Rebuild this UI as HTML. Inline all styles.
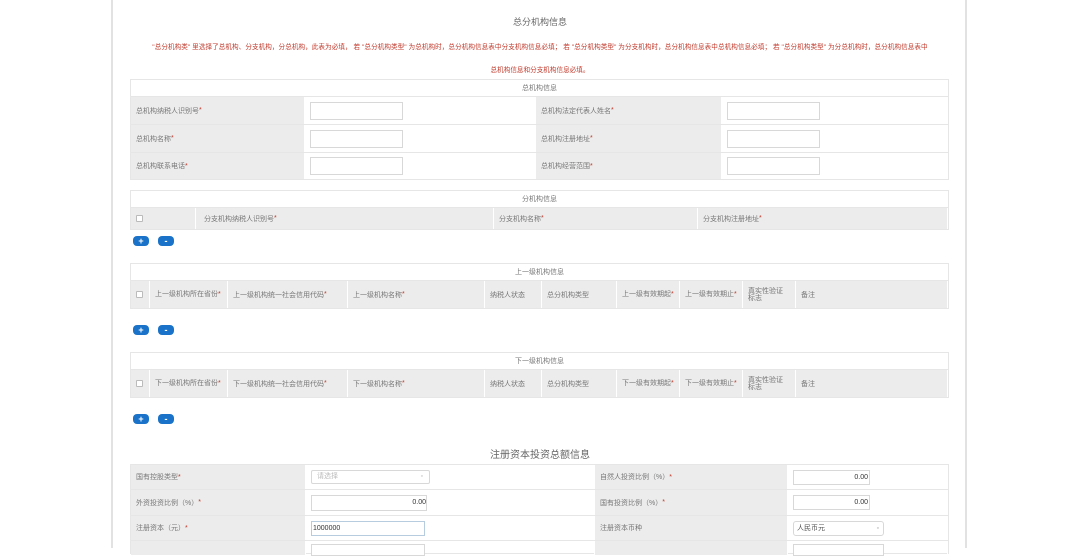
<!DOCTYPE html>
<html><head><meta charset="utf-8"><style>
*{margin:0;padding:0;box-sizing:border-box}
body{width:1080px;height:548px;overflow:hidden;background:#fff;font-family:"Liberation Sans","Noto Sans CJK SC",sans-serif;font-size:7px;color:#777;position:relative}
.pg{position:absolute;left:111px;top:0;width:856px;height:548px;border-left:2px solid #e2e2e2;border-right:2px solid #e2e2e2}
.a{position:absolute}
.t{position:absolute;left:130px;width:819px;border:1px solid #e6e6e6;background:#fff}
.hd{height:17px;line-height:17px;text-align:center;border-bottom:1px solid #e6e6e6}
.row{display:flex;border-top:1px solid #e6e6e6}
.row>div{border-right:1px solid #fff;display:flex;align-items:center;padding-left:5px}
.g{background:#ececec}
.inp{border:1px solid #d8d8d8;background:#fff;height:18px}
.r{color:#c0392b}
.btn{position:absolute;width:16px;height:10px;border-radius:4px;background:#1a73c8;color:#fff;font-size:9px;line-height:10px;text-align:center;font-weight:bold}
.cb{width:7px;height:7px;border:1px solid #bbb;border-radius:1px;background:#fff}
</style></head><body>
<div class="pg"></div>
<div class="a" style="left:0;width:1080px;top:15px;text-align:center;font-size:9px;color:#666">总分机构信息</div>
<div class="a r" style="left:120px;width:840px;top:41px;text-align:center;font-size:6.6px;white-space:nowrap;letter-spacing:0.05px">"总分机构类" 里选择了总机构、分支机构，分总机构，此表为必填， 若 "总分机构类型" 为总机构时，总分机构信息表中分支机构信息必填； 若 "总分机构类型" 为分支机构时，总分机构信息表中总机构信息必填； 若 "总分机构类型" 为分总机构时，总分机构信息表中</div>
<div class="a r" style="left:0;width:1080px;top:64px;text-align:center;font-size:6.6px">总机构信息和分支机构信息必填。</div>

<div class="t" style="top:79px">
<div class="hd">总机构信息</div>
<div class="row" style="height:27px;border-top:0"><div class="g" style="width:174px">总机构纳税人识别号 <span class="r">*</span></div><div style="width:231px"><div class="inp" style="width:93px"></div></div><div class="g" style="width:186px">总机构法定代表人姓名 <span class="r">*</span></div><div style="flex:1"><div class="inp" style="width:93px"></div></div></div>
<div class="row" style="height:28px"><div class="g" style="width:174px">总机构名称 <span class="r">*</span></div><div style="width:231px"><div class="inp" style="width:93px"></div></div><div class="g" style="width:186px">总机构注册地址 <span class="r">*</span></div><div style="flex:1"><div class="inp" style="width:93px"></div></div></div>
<div class="row" style="height:27px"><div class="g" style="width:174px">总机构联系电话 <span class="r">*</span></div><div style="width:231px"><div class="inp" style="width:93px"></div></div><div class="g" style="width:186px">总机构经营范围 <span class="r">*</span></div><div style="flex:1"><div class="inp" style="width:93px"></div></div></div>
</div>

<div class="t" style="top:190px">
<div class="hd">分机构信息</div>
<div class="row g" style="height:21px;border-top:0"><div style="width:65px"><div class="cb"></div></div><div style="width:298px;padding-left:8px">分支机构纳税人识别号 <span class="r">*</span></div><div style="width:204px">分支机构名称 <span class="r">*</span></div><div style="flex:1">分支机构注册地址 <span class="r">*</span></div></div>
</div>
<div class="btn" style="left:133px;top:236px">+</div><div class="btn" style="left:158px;top:236px">-</div>

<div class="t" style="top:263px">
<div class="hd">上一级机构信息</div>
<div class="row g" style="height:27px;border-top:0"><div style="width:19px"><div class="cb"></div></div><div style="width:78px;line-height:7px">上一级机构所在省份<br><span class="r">*</span></div><div style="width:120px">上一级机构统一社会信用代码 <span class="r">*</span></div><div style="width:137px">上一级机构名称 <span class="r">*</span></div><div style="width:57px">纳税人状态</div><div style="width:75px">总分机构类型</div><div style="width:63px;line-height:7px">上一级有效期起<br><span class="r">*</span></div><div style="width:63px;line-height:7px">上一级有效期止<br><span class="r">*</span></div><div style="width:53px;line-height:7px">真实性验证<br>标志</div><div style="flex:1">备注</div></div>
</div>
<div class="btn" style="left:133px;top:325px">+</div><div class="btn" style="left:158px;top:325px">-</div>

<div class="t" style="top:352px">
<div class="hd">下一级机构信息</div>
<div class="row g" style="height:27px;border-top:0"><div style="width:19px"><div class="cb"></div></div><div style="width:78px;line-height:7px">下一级机构所在省份<br><span class="r">*</span></div><div style="width:120px">下一级机构统一社会信用代码 <span class="r">*</span></div><div style="width:137px">下一级机构名称 <span class="r">*</span></div><div style="width:57px">纳税人状态</div><div style="width:75px">总分机构类型</div><div style="width:63px;line-height:7px">下一级有效期起<br><span class="r">*</span></div><div style="width:63px;line-height:7px">下一级有效期止<br><span class="r">*</span></div><div style="width:53px;line-height:7px">真实性验证<br>标志</div><div style="flex:1">备注</div></div>
</div>
<div class="btn" style="left:133px;top:414px">+</div><div class="btn" style="left:158px;top:414px">-</div>

<div class="a" style="left:0;width:1080px;top:446px;text-align:center;font-size:10px;color:#666">注册资本投资总额信息</div>
<div class="t" style="top:464px;height:90px">
<div class="row" style="height:24px;border-top:0"><div class="g" style="width:175px">国有控股类型 <span class="r">*</span></div><div style="width:289px"><div class="inp" style="width:119px;height:14px;color:#bbb;padding-left:5px;line-height:12px;border-radius:2px">请选择<span style="float:right;margin-right:6px">▫</span></div></div><div class="g" style="width:193px">自然人投资比例（%）<span class="r">*</span></div><div style="flex:1"><div class="inp" style="width:77px;height:15px;text-align:right;padding-right:1px;line-height:13px;color:#333">0.00</div></div></div>
<div class="row" style="height:26px"><div class="g" style="width:175px">外资投资比例（%）<span class="r">*</span></div><div style="width:289px"><div class="inp" style="width:116px;height:16px;text-align:right;line-height:14px;color:#333">0.00</div></div><div class="g" style="width:193px">国有投资比例（%）<span class="r">*</span></div><div style="flex:1"><div class="inp" style="width:77px;height:15px;text-align:right;padding-right:1px;line-height:13px;color:#333">0.00</div></div></div>
<div class="row" style="height:25px"><div class="g" style="width:175px">注册资本（元）<span class="r">*</span></div><div style="width:289px"><div class="inp" style="width:114px;height:15px;line-height:13px;color:#333;padding-left:1px;border-color:#b8cce0">1000000</div></div><div class="g" style="width:193px">注册资本币种</div><div style="flex:1"><div class="inp" style="width:91px;height:15px;line-height:13px;color:#555;padding-left:3px;border-radius:3px">人民币元<span style="float:right;margin-right:4px;color:#aaa">▫</span></div></div></div>
<div class="row" style="height:15px"><div class="g" style="width:175px"></div><div style="width:289px"><div class="inp" style="width:114px;height:12px;margin-top:4px"></div></div><div class="g" style="width:193px"></div><div style="flex:1"><div class="inp" style="width:91px;height:12px;margin-top:4px"></div></div></div>
</div>
</body></html>
